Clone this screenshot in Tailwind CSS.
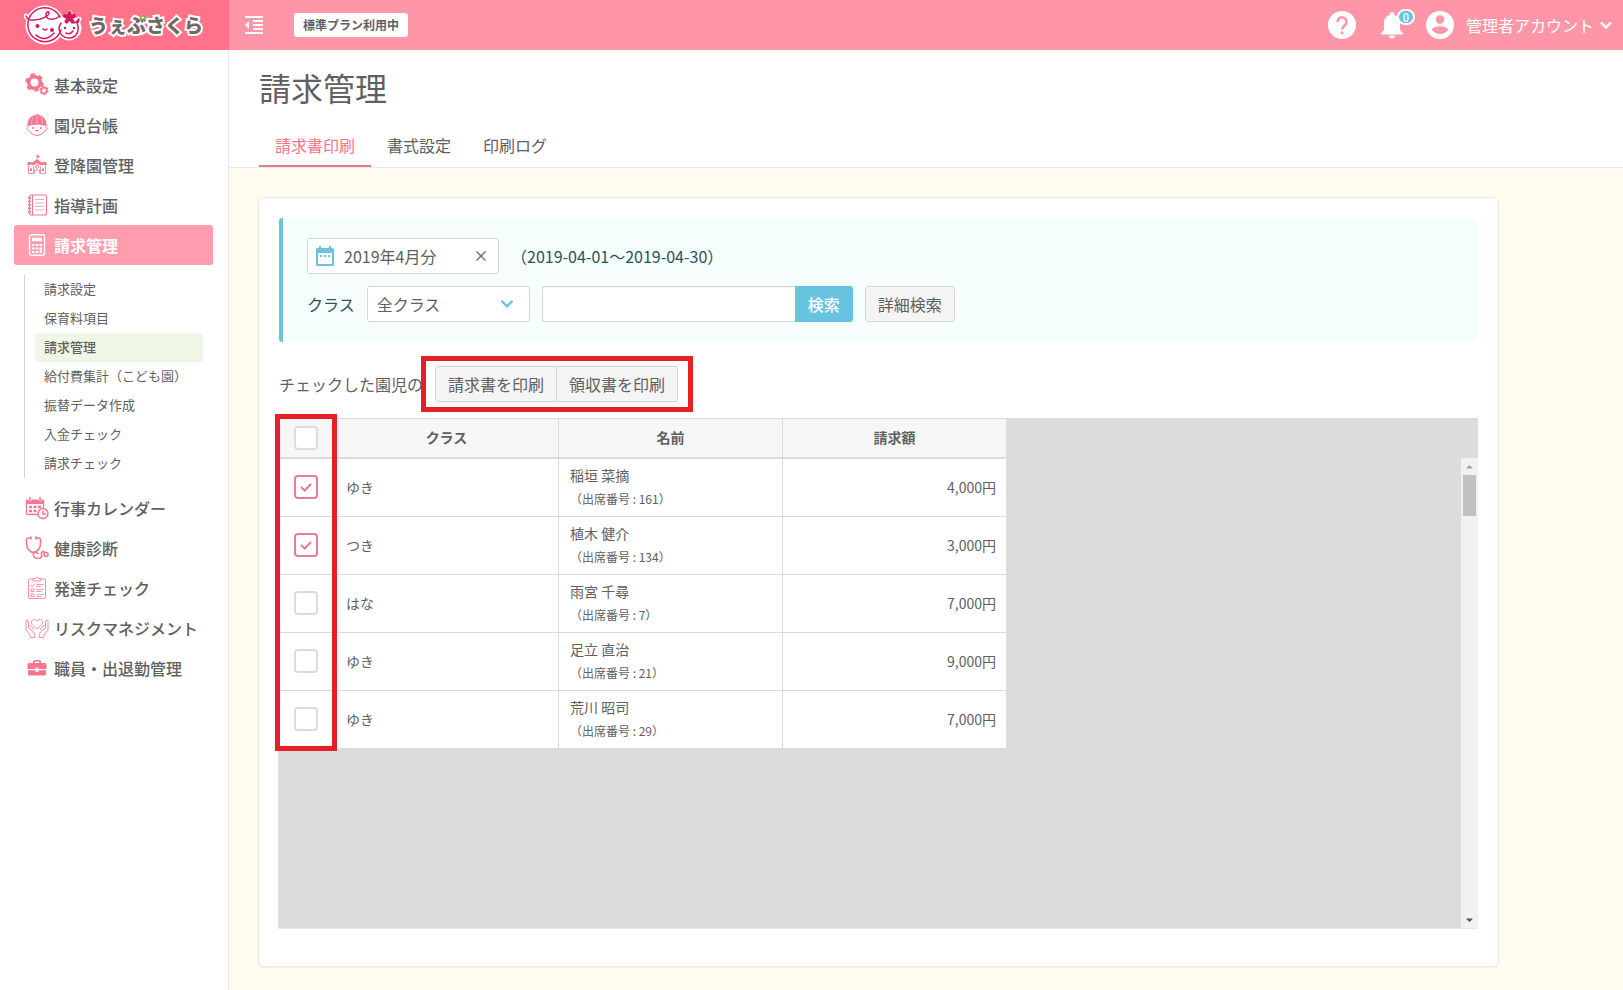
<!DOCTYPE html>
<html lang="ja">
<head>
<meta charset="utf-8">
<meta name="viewport" content="width=device-width, initial-scale=1">
<title>請求管理 | うぇぶさくら</title>
<script src="https://cdn.jsdelivr.net/npm/@tailwindcss/browser@4"></script>
</head>
<body class="flex min-h-screen flex-col bg-white font-['Noto_Sans_CJK_JP',sans-serif] text-base text-[#606060]">

<header class="flex h-[50px] shrink-0 items-center bg-[#ff96a8] text-white">
  <a href="#" class="flex h-full w-[229px] shrink-0 items-center bg-[#ff728a] pl-6">
    <svg class="h-[44px] w-[58px] shrink-0" viewBox="0 0 58 44" fill="none" stroke-linecap="round" stroke-linejoin="round">
      <g stroke="#fff" stroke-width="5" fill="#fff"><circle cx="21" cy="22" r="17"/><circle cx="45" cy="25" r="10"/><path d="M2 13q2 4 6 4M55 16q-1 3-3 3M46 10v4"/></g>
      <g stroke="#d61a5f" stroke-width="1.500">
        <path d="M37 27A17 17 0 1 1 36 14M2 13q2 5 7 4 9 0 15-5c3-3-1-5-2-1-1 6 8 7 14 2M37 20q-2 3-2 6c1 6 5 9 10 9 8 0 11-8 8-15q2-1 2-4-2 3-5 4"/>
        <path d="M12 32q9 8 18-2M19 26q2 2 4 0M42 30q4 2 7-2"/>
      </g>
      <g fill="#d61a5f"><circle cx="13.500" cy="23" r="2"/><circle cx="28" cy="27" r="2"/><circle cx="41" cy="25" r="1.200"/><circle cx="50" cy="25" r="1.200"/></g>
      <g stroke="#d61a5f" stroke-width="4"><path d="M45.500 14.500V10M45.500 14.500l4.500-1.500M45.500 14.500l3 4M45.500 14.500l-3 4M45.500 14.500L41 13"/></g>
    </svg>
    <span class="relative ml-[7px] text-[19px] leading-7 font-black whitespace-nowrap text-[#6f6866] [-webkit-text-stroke:4px_white] [paint-order:stroke_fill]">うぇぶさくら
      <svg class="absolute top-1 left-[50px] size-2" viewBox="0 0 8 8" fill="none" stroke="#6fb52c" stroke-width="2" stroke-linecap="round"><path d="M1.500 2.500l1.500 2M5 1l1.500 2"/></svg>
    </span>
  </a>
  <button type="button" aria-label="メニューを閉じる" class="ml-4 shrink-0">
    <svg class="h-[18px] w-[18px]" viewBox="0 0 18 18" fill="#fff"><path d="M0 0h18v2H0zM8 4h10v2H8zM8 8h10v2H8zM8 12h10v2H8zM0 16h18v2H0zM0 9l4-4v8z"/></svg>
  </button>
  <span class="ml-[31px] rounded-[3px] bg-white px-[9px] text-xs leading-6 font-bold text-[#606060]">標準プラン利用中</span>
  <nav class="ml-auto flex items-center pr-[11px]" aria-label="アカウント">
    <button type="button" aria-label="ヘルプ">
      <svg class="size-7" viewBox="0 0 28 28" fill="none"><circle cx="14" cy="14" r="14" fill="#fff"/><path d="M9.500 11a4.500 4.500 0 1 1 7.500 3.200c-2 1.700-3 2.300-3 4.300" stroke="#ff96a8" stroke-width="2.500"/><path d="M12.700 20.500h2.700v2.700h-2.700z" fill="#ff96a8"/></svg>
    </button>
    <button type="button" aria-label="お知らせ 0件" class="relative ml-[25px] w-[36px]">
      <svg class="h-7 w-[22px]" viewBox="0 0 22 28" fill="#fff"><path d="M11 1a2.200 2.200 0 0 0-2.200 2.200v.9C5.300 5 3 8 3 12v7l-3 3v1.500h22V22l-3-3v-7c0-4-2.300-7-5.800-7.900v-.9A2.200 2.200 0 0 0 11 1zM8 24.500a3 3 0 0 0 6 0z"/></svg>
      <span class="absolute -top-[2px] left-4 h-4 w-[18px] rounded-full border-2 border-white bg-[#67c3df] text-center text-[11px] leading-3 font-medium">0</span>
    </button>
    <button type="button" class="ml-[9px] flex items-center">
      <svg class="size-7" viewBox="0 0 28 28"><circle cx="14" cy="14" r="14" fill="#fff"/><g fill="#ff96a8"><circle cx="14" cy="8.500" r="4.200"/><path d="M5.600 18.500C7 16.300 11 15.200 14 15.200s7 1.100 8.400 3.300a10 10 0 0 1-16.800 0z"/></g></svg>
      <span class="ml-3 text-base leading-6">管理者アカウント</span>
      <svg class="ml-[6px] h-2 w-3" viewBox="0 0 12 8" fill="none" stroke="#fff" stroke-width="2.400"><path d="M1 1.500l5 5 5-5"/></svg>
    </button>
  </nav>
</header>

<div class="flex flex-1">
  <aside class="w-[229px] shrink-0 border-r border-[#e8e8e8] bg-white pt-[15px] pr-[15px] pl-[14px]">
    <nav aria-label="メインメニュー" class="font-medium">
      <a href="#" class="flex h-10 items-center gap-[5px] pl-[11px] leading-6">
        <svg class="size-6 shrink-0" viewBox="0 0 24 24" fill="none" stroke="#f9758e"><circle cx="9.500" cy="9.500" r="5.800" stroke-width="3.600"/><circle cx="9.500" cy="9.500" r="8" stroke-width="2.500" stroke-dasharray="4.200 4.180"/><circle cx="19" cy="17.500" r="2.800" stroke-width="1.800"/><circle cx="19" cy="17.500" r="4" stroke-width="1.200" stroke-dasharray="2.100 2.090"/></svg>
        基本設定</a>
      <a href="#" class="flex h-10 items-center gap-[5px] pl-[11px] leading-6">
        <svg class="size-6 shrink-0" viewBox="0 0 24 24"><path fill="#f9758e" d="M2.500 12C2.500 6 6 2.500 11 2l.3-1h1.400l.3 1c5 .5 8.500 4 8.500 10l1.500 1.500c-7-2.500-15-2.500-22 0z"/><path d="M12 2v9M8 4Q6.500 7 6.500 11M16 4q1.500 3 1.500 7" fill="none" stroke="#ffc3cd" stroke-width=".8"/><path d="M3.500 14c-2 0-2 3 .5 3.500Q7 22.500 12 22.500t8-5C22.500 17 22.500 14 20.500 14" fill="none" stroke="#f9758e"/><g fill="#f9758e"><circle cx="8" cy="15" r="1"/><circle cx="16" cy="15" r="1"/><path d="M9.500 17h5q-2.500 3-5 0z"/></g></svg>
        園児台帳</a>
      <a href="#" class="flex h-10 items-center gap-[5px] pl-[11px] leading-6">
        <svg class="size-6 shrink-0" viewBox="0 0 24 24" fill="#f9758e"><path d="M11.600 2h.8l3 1.500-3 1.500v1.500L18 10.500V12h-3l-3-2-3 2H6v-1.500l5.600-4zM3 9h4l-2 3H2zM17 9h4l1 3h-3z"/><path d="M3.500 12.500v8h5v-7M20.500 12.500v8h-5v-7M9.500 20.500V17h5v3.500" fill="none" stroke="#fa8ea2"/><circle cx="12" cy="13.500" r="1.700" fill="none" stroke="#f9758e"/><path d="M5 15.500h2v2.500H5zM17 15.500h2v2.500h-2z"/></svg>
        登降園管理</a>
      <a href="#" class="flex h-10 items-center gap-[5px] pl-[11px] leading-6">
        <svg class="size-6 shrink-0" viewBox="0 0 24 24" fill="none" stroke="#f9758e"><rect x="4.500" y="2" width="17" height="20" rx="2" stroke-width="1.200"/><path d="M7.500 2v20" /><path d="M3 5h3M3 8.500h3M3 12h3M3 15.500h3M3 19h3" stroke-width="1.500"/><path d="M10 6.500h9M10 10h9M10 13.500h9M10 17h9" stroke="#fbaab8"/></svg>
        指導計画</a>
      <a href="#" aria-current="page" class="flex h-10 items-center gap-[5px] rounded-[3px] bg-[#ff9cad] pl-[11px] leading-6 font-bold text-white">
        <svg class="size-6 shrink-0" viewBox="0 0 24 24" fill="none" stroke="#fff"><rect x="4.500" y="1.700" width="15" height="20.600" rx="2" stroke-width="1.400"/><path d="M7 6.500h10" stroke-width="3.500"/><path d="M7 12h2.500M10.800 12h2.500M14.500 12H17M7 15.500h2.500M10.800 15.500h2.500M7 19h2.500M10.800 19h2.500" stroke-width="2.200"/><path d="M15.800 14.400v5.700" stroke-width="2.400"/></svg>
        請求管理</a>
    </nav>
    <ul class="mt-[10px] ml-[10px] border-l border-[#d0d0d0] pr-[10px] pl-[10px] text-[13px] leading-[27px]">
      <li><a href="#" class="block rounded-[3px] pb-[2px] pl-[9px]">請求設定</a></li>
      <li><a href="#" class="block rounded-[3px] pb-[2px] pl-[9px]">保育料項目</a></li>
      <li><a href="#" aria-current="page" class="block rounded-[3px] bg-[#f0f6e6] pb-[2px] pl-[9px] font-medium">請求管理</a></li>
      <li><a href="#" class="block rounded-[3px] pb-[2px] pl-[9px]">給付費集計（こども園）</a></li>
      <li><a href="#" class="block rounded-[3px] pb-[2px] pl-[9px]">振替データ作成</a></li>
      <li><a href="#" class="block rounded-[3px] pb-[2px] pl-[9px]">入金チェック</a></li>
      <li><a href="#" class="block rounded-[3px] pb-[2px] pl-[9px]">請求チェック</a></li>
    </ul>
    <nav aria-label="その他のメニュー" class="mt-[10px] font-medium whitespace-nowrap">
      <a href="#" class="flex h-10 items-center gap-[5px] pl-[11px] leading-6">
        <svg class="size-6 shrink-0" viewBox="0 0 24 24" fill="none" stroke="#f9758e"><path d="M13 18.500H3q-1.500 0-1.500-1.500V5h17v7" stroke-width="1.300"/><path d="M1 3.500h18V8H1z" fill="#f9758e" stroke="none"/><path d="M5 1v4M15 1v4" stroke="#fff" stroke-width="3"/><path d="M5 1v4M15 1v4" stroke-width="1.500"/><path d="M4 11h3M8.500 11h3M13 11h3M4 15h3M8.500 15h3" stroke-width="2.500"/><circle cx="18" cy="17.500" r="5" fill="#fff" stroke-width="1.400"/><path d="M18 14.500V18h3" stroke-width="1.400"/></svg>
        行事カレンダー</a>
      <a href="#" class="flex h-10 items-center gap-[5px] pl-[11px] leading-6">
        <svg class="size-6 shrink-0" viewBox="0 0 24 24" fill="none" stroke="#f9758e" stroke-width="1.600" stroke-linecap="round"><path d="M5 2H3.500Q1.500 2 1.500 4v4c0 4 3.500 8.500 7 8.500s7-4.500 7-8.500V4q0-2-2-2H12M6 1v2M11 1v2"/><path d="M8.500 16.500c-1 4 1.500 6 4.500 6s4-2 3.500-4 .5-3.500 3-2.500M8.500 16.500q3-1 4.500 1"/><circle cx="21" cy="18.500" r="2"/></svg>
        健康診断</a>
      <a href="#" class="flex h-10 items-center gap-[5px] pl-[11px] leading-6">
        <svg class="size-6 shrink-0" viewBox="0 0 24 24" fill="none" stroke="#fa8ea2"><rect x="3.500" y="3" width="17" height="19.500" rx="1.500"/><path d="M8 5V2.500h2.500Q12 0 13.500 2.500H16V5z" fill="#fff"/><path d="M6 9l1.200 1.500L9.500 8M6 13h3v2.500H6zM6 18h3v2.500H6zM11.500 8.500h7M11.500 10.500h4M11.500 13.500h3M15.500 13.500h3M11.500 15.500h5M11.500 18.500h3M15.500 18.500h3M11.500 20.500h5"/></svg>
        発達チェック</a>
      <a href="#" class="flex h-10 items-center gap-[5px] pl-[11px] leading-6">
        <svg class="size-6 shrink-0" viewBox="0 0 24 24" fill="none" stroke="#fa8ea2" stroke-linejoin="round"><path d="M12 12.500C8 10 6.500 8.500 6.500 6.200c0-3 4-4 5.500-1 1.500-3 5.500-2 5.500 1 0 2.300-1.500 3.800-5.500 6.300z"/><path d="M1 4.500q2-1.500 2.500 1V12l5 4q1.500 1.500 1.500 5.500H5.500Q5.500 18 1 14zM4 10q1.500-1 2.500.5L9 14M23 4.500q-2-1.500-2.500 1V12l-5 4q-1.500 1.500-1.500 5.500h4.500q0-3.500 4.500-7.500zM20 10q-1.500-1-2.500.5L15 14"/></svg>
        リスクマネジメント</a>
      <a href="#" class="flex h-10 items-center gap-[5px] pl-[11px] leading-6">
        <svg class="size-6 shrink-0" viewBox="0 0 24 24" fill="#f9758e"><path fill-rule="evenodd" d="M8 7V5.500Q8 4 9.500 4h5Q16 4 16 5.500V7h4q1.500 0 1.500 1.500V13h-8v-1.200h-3V13h-8V8.500Q2.500 7 4 7zM9.800 7h4.400V5.600H9.800zM3 14.200h7.500v1.500h3v-1.500H21v4q0 1.300-1.500 1.300h-15Q3 19.500 3 18.200z"/></svg>
        職員・出退勤管理</a>
    </nav>
  </aside>

  <main class="flex min-w-0 flex-1 flex-col bg-[#fffbee]">
    <div class="border-b border-[#e8e8e8] bg-white pl-[30px]">
      <h1 class="pt-[14px] text-[32px] leading-[46px] font-normal">請求管理</h1>
      <nav class="mt-[14px] flex leading-6" aria-label="タブ">
        <a href="#" aria-current="page" class="border-b-2 border-[#e07b92] px-4 pt-[9px] pb-2 text-[#fb728b]">請求書印刷</a>
        <a href="#" class="px-4 pt-[9px] pb-[10px]">書式設定</a>
        <a href="#" class="px-4 pt-[9px] pb-[10px]">印刷ログ</a>
      </nav>
    </div>

    <section class="mx-[29px] mt-[29px] mb-[23px] flex max-w-[1241px] flex-1 flex-col rounded-md border border-[#ece9df] bg-white px-5 pt-5 pb-[37px] shadow-xs">
      <form class="flex flex-col gap-3 rounded-[3px] border-l-4 border-[#6cc2dc] bg-[#f6fdfd] py-5 pl-6 text-[#2c525c]">
        <div class="flex items-center">
          <div class="flex h-9 w-[192px] items-center rounded-[3px] border border-[#d6d6d6] bg-white pl-2">
            <svg class="h-5 w-[18px] shrink-0" viewBox="0 0 18 20"><path fill="#6cc2dc" fill-rule="evenodd" d="M3 0h2v2h8V0h2v2h1.500Q18 2 18 3.500v15q0 1.500-1.500 1.500h-15Q0 20 0 18.500v-15Q0 2 1.500 2H3zM2 7v11h14V7z"/><path fill="#6cc2dc" d="M4 9h2v2H4zM8 9h2v2H8zM12 9h2v2h-2z"/></svg>
            <input type="text" aria-label="対象月" value="2019年4月分" class="ml-[10px] min-w-0 flex-1 text-base leading-6 text-[#606060] outline-none">
            <button type="button" aria-label="クリア" class="mr-[12px] shrink-0"><svg class="size-[10px]" viewBox="0 0 10 10" stroke="#666" stroke-width="1.300"><path d="M.5.5l9 9M9.500.5l-9 9"/></svg></button>
          </div>
          <span class="ml-3 leading-6">（2019-04-01～2019-04-30）</span>
        </div>
        <div class="flex items-center">
          <label for="class-select" class="leading-6">クラス</label>
          <div class="relative ml-3">
            <select id="class-select" class="block h-9 w-[163px] appearance-none rounded-[3px] border border-[#d6d6d6] bg-white pl-[9px] text-base leading-6 text-[#606060]"><option>全クラス</option></select>
            <svg class="pointer-events-none absolute top-[14px] right-[17px] h-2 w-3" viewBox="0 0 12 8" fill="none" stroke="#67c3df" stroke-width="2.400" stroke-linecap="round"><path d="M1.200 1.500L6 6.300l4.800-4.800"/></svg>
          </div>
          <input type="search" aria-label="検索キーワード" class="ml-3 h-9 w-[253px] rounded-l-[3px] border border-r-0 border-[#d6d6d6] bg-white px-2 inset-shadow-xs">
          <button type="submit" class="h-9 rounded-r-[3px] bg-[#67c3df] px-[13px] leading-6 font-medium text-white">検索</button>
          <button type="button" class="ml-3 h-9 rounded-[3px] border border-[#d6d6d6] bg-[#f4f4f4] px-3 leading-6 text-[#606060]">詳細検索</button>
        </div>
      </form>

      <div class="mt-6 flex items-center">
        <span class="leading-6">チェックした園児の</span>
        <div class="relative ml-3 flex">
          <button type="button" class="h-9 rounded-l-[3px] border border-[#d6d6d6] bg-[#f4f4f4] px-3 leading-6">請求書を印刷</button>
          <button type="button" class="h-9 rounded-r-[3px] border border-l-0 border-[#d6d6d6] bg-[#f4f4f4] px-3 leading-6">領収書を印刷</button>
          <div class="pointer-events-none absolute -inset-y-[10px] -right-[15px] -left-[14px] border-[5px] border-[#e61e28]"></div>
        </div>
      </div>

      <div class="mt-4 -ml-px flex flex-1 justify-between border-b border-[#e8e8e8] bg-[#dcdcdc]">
        <div class="relative self-start">
          <table class="w-[728px] table-fixed border-separate border-spacing-0 bg-white text-sm [&_td]:h-[58px] [&_td]:border-b [&_td]:border-[#dcdcdc] [&_td]:pb-[2px] [&_tr:last-child_td]:h-[57px] [&_tr:last-child_td]:border-b-0">
            <thead>
              <tr class="bg-[#f6f6f6] [&>th]:h-[41px] [&>th]:border-t [&>th]:border-b-2 [&>th]:border-[#dcdcdc]">
                <th class="w-[57px] border-r p-0"><input type="checkbox" aria-label="すべて選択" class="mx-auto block size-6 appearance-none rounded-[4px] border-2 border-[#dcdcdc] bg-white"></th>
                <th class="w-[224px] border-r p-0 pb-[3px]">クラス</th>
                <th class="w-[224px] border-r p-0 pb-[3px]">名前</th>
                <th class="p-0 pb-[3px]">請求額</th>
              </tr>
            </thead>
            <tbody id="rows"></tbody>
          </table>
          <div class="pointer-events-none absolute -top-1 -bottom-[3px] -left-[3px] w-[62px] border-[5px] border-[#e61e28]"></div>
        </div>
        <div class="mt-10 flex w-[17px] flex-col items-center bg-[#f1f1f1]" aria-hidden="true">
          <svg class="size-[17px]" viewBox="0 0 17 17"><path fill="#a3a3a3" d="M5 10.500h7L8.500 7z"/></svg>
          <div class="h-[41px] w-[13px] bg-[#c1c1c1]"></div>
          <svg class="mt-auto size-[17px]" viewBox="0 0 17 17"><path fill="#505050" d="M5 7.500h7L8.500 11z"/></svg>
        </div>
      </div>
    </section>
  </main>
</div>

<template id="row">
  <tr>
    <td class="border-r">
      <div class="relative mx-auto size-6">
        <input type="checkbox" class="peer block size-6 appearance-none rounded-[4px] border-2 border-[#dcdcdc] bg-white checked:border-[#e57d93]">
        <svg class="pointer-events-none absolute inset-0 hidden size-6 peer-checked:block" viewBox="0 0 24 24" fill="none" stroke="#f9758e" stroke-width="2"><path d="M7 12l3.700 3.500L17 9"/></svg>
      </div>
    </td>
    <td class="border-r pl-[11px] text-sm"></td>
    <td class="border-r pl-[11px]"><div class="text-sm leading-6"></div><div class="text-xs leading-[23px]"></div></td>
    <td class="pr-[10px] text-right text-sm"></td>
  </tr>
</template>
<script>
  const children = [
    ['ゆき', '稲垣 菜摘', 161, '4,000円', true],
    ['つき', '植木 健介', 134, '3,000円', true],
    ['はな', '雨宮 千尋', 7, '7,000円', false],
    ['ゆき', '足立 直治', 21, '9,000円', false],
    ['ゆき', '荒川 昭司', 29, '7,000円', false],
  ];
  const tbody = document.getElementById('rows');
  for (const [group, name, number, amount, checked] of children) {
    const row = document.getElementById('row').content.cloneNode(true);
    const cells = row.querySelectorAll('td');
    const box = cells[0].querySelector('input');
    box.checked = checked;
    box.setAttribute('aria-label', name);
    cells[1].textContent = group;
    cells[2].children[0].textContent = name;
    cells[2].children[1].textContent = `（出席番号 : ${number}）`;
    cells[3].textContent = amount;
    tbody.append(row);
  }
</script>
</body>
</html>
